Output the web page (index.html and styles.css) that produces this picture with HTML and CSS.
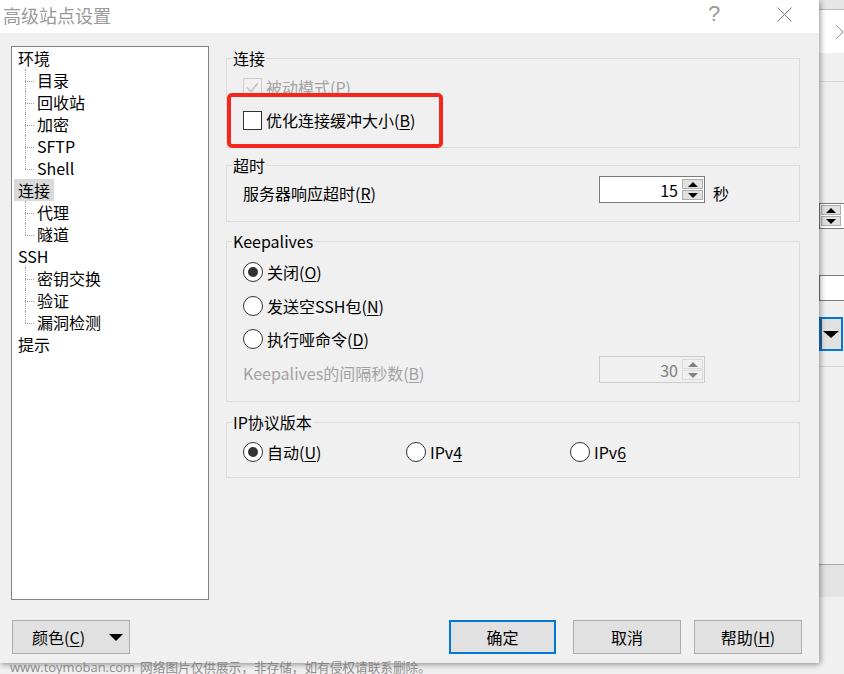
FILE: index.html
```html
<!DOCTYPE html>
<html lang="zh-CN">
<head>
<meta charset="utf-8">
<title>高级站点设置</title>
<link rel="stylesheet" href="styles.css">
</head>
<body>
<div class="screen">
  <div class="dialog">
    <div class="titlebar">
      <span class="title">高级站点设置</span>
      <span class="tb-help">?</span>
      <svg class="tb-close" width="15" height="15" viewBox="0 0 15 15"><path d="M0.5 0.5L14.5 14.5M14.5 0.5L0.5 14.5" stroke="#777" stroke-width="1" fill="none"/></svg>
    </div>
    <div class="dlg-body">
      <div class="main">
        <div class="tree">
          <ul class="tree-root">
            <li><span class="node">环境</span>
              <ul class="kids">
                <li><span class="node">目录</span></li>
                <li><span class="node">回收站</span></li>
                <li><span class="node">加密</span></li>
                <li><span class="node">SFTP</span></li>
                <li><span class="node">Shell</span></li>
              </ul>
            </li>
            <li><span class="node sel">连接</span>
              <ul class="kids">
                <li><span class="node">代理</span></li>
                <li><span class="node">隧道</span></li>
              </ul>
            </li>
            <li><span class="node">SSH</span>
              <ul class="kids">
                <li><span class="node">密钥交换</span></li>
                <li><span class="node">验证</span></li>
                <li><span class="node">漏洞检测</span></li>
              </ul>
            </li>
            <li><span class="node">提示</span></li>
          </ul>
        </div>
        <div class="panel">
          <fieldset class="group g1">
            <legend>连接</legend>
            <div class="gbody">
              <div class="row dis">
                <span class="cbox dis"><svg width="17" height="17" viewBox="0 0 17 17"><polyline points="3,8.5 7,12.5 14,4" fill="none" stroke="#c4c4c4" stroke-width="1.6"/></svg></span>
                <span class="lbl">被动模式(<u>P</u>)</span>
              </div>
              <div class="row r2">
                <span class="cbox"></span>
                <span class="lbl">优化连接缓冲大小(<u>B</u>)</span>
              </div>
              <div class="redmark"></div>
            </div>
          </fieldset>
          <fieldset class="group g2">
            <legend>超时</legend>
            <div class="gbody">
              <div class="srow">
                <span class="slbl">服务器响应超时(<u>R</u>)</span>
                <div class="spin">
                  <span class="sval">15</span>
                  <div class="sbtns">
                    <span class="sbtn"><i class="up"></i></span>
                    <span class="sbtn"><i class="down"></i></span>
                  </div>
                </div>
                <span class="unit">秒</span>
              </div>
            </div>
          </fieldset>
          <fieldset class="group g3">
            <legend>Keepalives</legend>
            <div class="gbody">
              <div class="row"><span class="radio on"></span><span class="lbl">关闭(<u>O</u>)</span></div>
              <div class="row k2"><span class="radio"></span><span class="lbl">发送空SSH包(<u>N</u>)</span></div>
              <div class="row k3"><span class="radio"></span><span class="lbl">执行哑命令(<u>D</u>)</span></div>
              <div class="srow k4">
                <span class="slbl dis">Keepalives的间隔秒数(<u>B</u>)</span>
                <div class="spin dis">
                  <span class="sval">30</span>
                  <div class="sbtns">
                    <span class="sbtn"><i class="up"></i></span>
                    <span class="sbtn"><i class="down"></i></span>
                  </div>
                </div>
              </div>
            </div>
          </fieldset>
          <fieldset class="group g4">
            <legend>IP协议版本</legend>
            <div class="gbody">
              <div class="row iprow">
                <div class="opt o1"><span class="radio on"></span><span class="lbl">自动(<u>U</u>)</span></div>
                <div class="opt o2"><span class="radio"></span><span class="lbl">IPv<u>4</u></span></div>
                <div class="opt"><span class="radio"></span><span class="lbl">IPv<u>6</u></span></div>
              </div>
            </div>
          </fieldset>
        </div>
      </div>
      <div class="buttons">
        <div class="btn color-btn"><span>颜色(<u>C</u>)</span><i class="tri"></i></div>
        <div class="btn ok">确定</div>
        <div class="btn cancel">取消</div>
        <div class="btn help">帮助(<u>H</u>)</div>
      </div>
    </div>
  </div>
  <div class="behind">
    <div class="bh-top"></div>
    <div class="bh-tab"><svg width="9" height="16" viewBox="0 0 9 16"><polyline points="1,1 8,8 1,15" fill="none" stroke="#9a9a9a" stroke-width="1"/></svg></div>
    <div class="bh-strip"></div>
    <div class="bh-spin">
      <span class="sbtn"><i class="up"></i></span>
      <span class="sbtn"><i class="down"></i></span>
    </div>
    <div class="bh-input"></div>
    <div class="bh-combo"><span class="bh-sep"></span><i class="bh-tri"></i></div>
    <div class="bh-line"></div>
    <div class="bh-band"></div>
  </div>
</div>
<div class="watermark"><span class="wm-lat">www.toymoban.com</span><span class="wm-cjk">网络图片仅供展示，非存储，如有侵权请联系删除。</span></div>
</body>
</html>
```
FILE: styles.css
```css
* { box-sizing: border-box; }
html, body { margin: 0; padding: 0; }
body {
  width: 844px;
  height: 674px;
  overflow: hidden;
  background: #f0f0f0;
  font-family: "Noto Sans CJK SC", "Noto Sans", sans-serif;
  font-size: 16px;
  color: #000;
  position: relative;
}
ul { list-style: none; margin: 0; padding: 0; }
u { text-decoration: underline; text-underline-offset: 2px; }

.screen { display: flex; height: 674px; align-items: flex-start; }

.dialog {
  width: 819px;
  height: 663px;
  flex: none;
  background: #f0f0f0;
  display: flex;
  flex-direction: column;
  position: relative;
  z-index: 1;
  box-shadow: 1px 1px 6px rgba(0,0,0,0.45);
}

/* title bar */
.titlebar {
  height: 33px;
  flex: none;
  background: #fff;
  display: flex;
  align-items: center;
  padding-left: 3px;
}
.title { font-size: 18px; color: #999; line-height: 24px; margin-bottom: 3px; }
.tb-help {
  margin-left: auto;
  width: 20px;
  text-align: center;
  align-self: flex-start;
  margin-top: 1px;
  font-family: "Liberation Sans", sans-serif;
  font-size: 22px;
  line-height: 26px;
  color: #9a9a9a;
  margin-right: 53px;
}
.tb-close { align-self: flex-start; margin-top: 7px; margin-right: 27px; }

/* body */
.dlg-body {
  flex: 1;
  display: flex;
  flex-direction: column;
  padding: 13px 19px 0 11px;
}
.main { display: flex; gap: 17px; height: 554px; }

/* tree */
.tree {
  width: 198px;
  height: 554px;
  flex: none;
  background: #fff;
  border: 1px solid #828282;
  padding-left: 2px;
  line-height: 22px;
}
.tree li { line-height: 22px; }
.node { display: inline-block; vertical-align: top; padding: 0 4px; line-height: 22px; height: 22px; }
.node.sel { background: #d9d9d9; }
.kids { margin-left: 11px; }
.kids > li { position: relative; padding-left: 8px; }
.kids > li::before {
  content: "";
  position: absolute;
  left: 0;
  top: 12px;
  width: 9px;
  border-top: 1px dotted #a0a0a0;
}
.kids > li::after {
  content: "";
  position: absolute;
  left: 0;
  top: 0;
  bottom: 0;
  border-left: 1px dotted #a0a0a0;
}
.kids > li:last-child::after { bottom: auto; height: 12px; }

/* right panel */
.panel { width: 574px; flex: none; display: flex; flex-direction: column; padding-top: 1px; }
.group {
  margin: 0;
  min-width: 0;
  border: 1px solid #dcdcdc;
  padding: 0 0 0 5px;
}
.group legend { padding: 0 1px; line-height: 22px; font-size: 16px; }
.gbody { padding-left: 11px; position: relative; }

.g1 .gbody { padding-top: 7px; padding-bottom: 16px; }
.g2 { margin-top: 6px; }
.g2 .gbody { padding-top: 0; padding-bottom: 18px; }
.g3 { margin-top: 8px; }
.g3 .gbody { padding-top: 9px; padding-bottom: 18px; }
.g4 { margin-top: 9px; }
.g4 .gbody { padding-top: 8px; padding-bottom: 14px; }

.row { display: flex; align-items: center; height: 22px; }
.row.r2 { margin-top: 11px; }
.row.k2 { margin-top: 12px; }
.row.k3 { margin-top: 11px; }
.lbl { margin-left: 4px; line-height: 22px; white-space: nowrap; }
.row.dis .lbl, .slbl.dis { color: #a3a3a3; }

.cbox {
  width: 19px;
  height: 19px;
  flex: none;
  border: 1px solid #333;
  background: #fff;
  display: flex;
  align-items: center;
  justify-content: center;
}
.cbox.dis { border-color: #cccccc; background: #f0f0f0; }

.radio {
  width: 20px;
  height: 20px;
  flex: none;
  border-radius: 50%;
  border: 1px solid #333;
  background: #fff;
  display: flex;
  align-items: center;
  justify-content: center;
}
.radio.on::after {
  content: "";
  width: 10px;
  height: 10px;
  border-radius: 50%;
  background: #333;
}

.redmark {
  position: absolute;
  left: -5px;
  top: 24px;
  width: 216px;
  height: 55px;
  border: 4px solid #f5261b;
  border-radius: 5px;
}

/* spin rows */
.srow { display: flex; align-items: flex-start; height: 27px; }
.srow.k4 { margin-top: 6px; }
.slbl { width: 356px; flex: none; margin-top: 6px; line-height: 22px; white-space: nowrap; }
.unit { margin-left: 8px; margin-top: 6px; line-height: 22px; }
.spin {
  width: 106px;
  height: 27px;
  flex: none;
  border: 1px solid #7a7a7a;
  background: #fff;
  display: flex;
  align-items: center;
}
.sval { flex: 1; text-align: right; padding-right: 4px; line-height: 22px; }
.sbtns { display: flex; flex-direction: column; gap: 1px; margin-right: 1px; }
.sbtn {
  width: 21px;
  height: 10px;
  border: 1px solid #adadad;
  background: #e1e1e1;
  display: flex;
  align-items: center;
  justify-content: center;
}
.sbtn .up { width: 0; height: 0; border-left: 5px solid transparent; border-right: 5px solid transparent; border-bottom: 5px solid #000; }
.sbtn .down { width: 0; height: 0; border-left: 5px solid transparent; border-right: 5px solid transparent; border-top: 5px solid #000; }
.spin.dis { border-color: #cccccc; background: #f0f0f0; }
.spin.dis .sval { color: #7f7f7f; }
.spin.dis .sbtn { border-color: #dadada; background: #f0f0f0; }
.spin.dis .up { border-bottom-color: #838383; }
.spin.dis .down { border-top-color: #838383; }

/* ip row */
.opt { display: flex; align-items: center; }
.opt.o1 { width: 163px; }
.opt.o2 { width: 164px; }

/* bottom buttons */
.buttons { display: flex; margin-top: 20px; height: 34px; }
.btn {
  height: 34px;
  border: 1px solid #adadad;
  background: #e1e1e1;
  display: flex;
  align-items: center;
  justify-content: center;
  line-height: 22px;
}
.color-btn { width: 118px; margin-left: 1px; justify-content: flex-start; padding: 0 6px 0 19px; }
.color-btn .tri {
  margin-left: auto;
  width: 0;
  height: 0;
  border-left: 7px solid transparent;
  border-right: 7px solid transparent;
  border-top: 7px solid #000;
}
.ok { width: 107px; margin-left: auto; border: 2px solid #0078d7; }
.cancel { width: 108px; margin-left: 17px; }
.help { width: 108px; margin-left: 13px; margin-right: -2px; }

/* window behind */
.behind {
  width: 25px;
  flex: none;
  height: 674px;
  display: flex;
  flex-direction: column;
  background: #f0f0f0;
}
.bh-top { height: 10px; background: #e6e6e6; border-bottom: 1px solid #b9b9b9; }
.bh-tab { height: 43px; background: #fff; padding: 14px 0 0 16px; }
.bh-tab svg { display: block; }
.bh-strip { height: 29px; border-bottom: 1px solid #d9d9d9; }
.bh-spin {
  margin-top: 121px;
  height: 26px;
  border: 1px solid #7a7a7a;
  border-right: 0;
  background: #fff;
  display: flex;
  flex-direction: column;
  gap: 1px;
  padding: 1px 0 0 1px;
}
.bh-spin .sbtn { width: 20px; }
.bh-input { margin-top: 46px; height: 26px; border: 1px solid #7a7a7a; border-right: 0; background: #fff; }
.bh-combo {
  margin-top: 16px;
  width: 24px;
  height: 34px;
  border: 2px solid #0078d7;
  background: #e1e1e1;
  display: flex;
  align-items: center;
}
.bh-sep { width: 1px; height: 30px; background: #555; }
.bh-tri {
  margin-left: 1px;
  width: 0;
  height: 0;
  border-left: 8px solid transparent;
  border-right: 8px solid transparent;
  border-top: 7px solid #000;
}
.bh-line { margin-top: 15px; height: 1px; background: #d5d5d5; }
.bh-band { margin-top: 197px; height: 33px; border-top: 1px solid #a8a8a8; background: #e3e3e3; }

/* watermark overlay */
.watermark {
  position: absolute;
  left: 10px;
  top: 657px;
  z-index: 2;
  line-height: 16px;
  color: rgba(120,120,120,0.85);
  white-space: nowrap;
}
.wm-lat { font-family: "Open Sans", sans-serif; font-size: 13px; }
.wm-cjk { font-family: "Noto Sans CJK SC", sans-serif; font-size: 12.65px; margin-left: 5px; }
```
